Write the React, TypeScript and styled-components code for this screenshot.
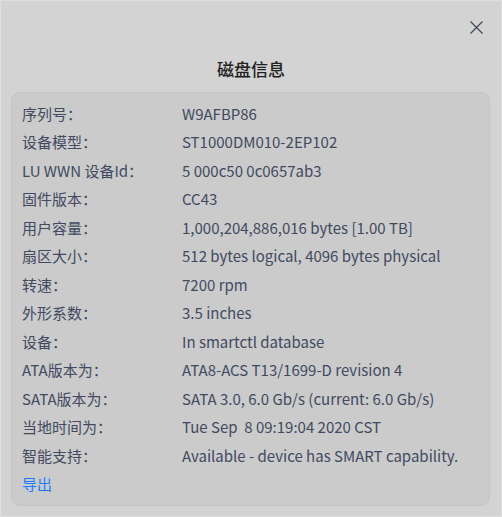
import React from "react";
import styled, { createGlobalStyle } from "styled-components";

const Global = createGlobalStyle`
  html, body { margin: 0; padding: 0; }
  body { background: #d3d3d3; }
`;

const Window = styled.div`
  box-sizing: border-box;
  width: 502px;
  height: 517px;
  background: #d3d3d3;
  border: 1px solid #dedede;
  display: flex;
  flex-direction: column;
  font-family: "Noto Sans CJK SC", "Noto Sans", sans-serif;
`;

const TitleBar = styled.div`
  height: 48px;
  display: flex;
  justify-content: flex-end;
  align-items: flex-start;
  padding: 20px 18px 0 0;
  box-sizing: border-box;
`;

const CloseButton = styled.button`
  width: 13px;
  height: 13px;
  padding: 0;
  border: none;
  background: transparent;
  display: flex;
  cursor: pointer;
`;

const Title = styled.h1`
  margin: 0;
  height: 42px;
  font-size: 17px;
  font-weight: 500;
  color: #202020;
  text-align: center;
  line-height: 40px;
`;

const Panel = styled.div`
  margin: 1px 11px 0 10px;
  box-sizing: border-box;
  height: 414px;
  background: #cbcbcb;
  border: 1px solid #c4c4c4;
  border-radius: 9px;
  padding: 6px 11px 0 10px;
  display: flex;
  flex-direction: column;
`;

const Grid = styled.div`
  display: grid;
  grid-template-columns: 160px 1fr;
  grid-auto-rows: 28.5px;
  align-items: center;
`;

const Label = styled.div`
  font-size: 15px;
  color: #414a60;
  white-space: nowrap;
`;

const Value = styled.div`
  font-size: 15px;
  color: #414a60;
  white-space: pre;
`;

const ExportLink = styled.a`
  font-size: 15px;
  color: #1a7bff;
  height: 28.5px;
  line-height: 28.5px;
  text-decoration: none;
  cursor: pointer;
`;

const rows: [string, string][] = [
  ["序列号：", "W9AFBP86"],
  ["设备模型：", "ST1000DM010-2EP102"],
  ["LU WWN 设备Id：", "5 000c50 0c0657ab3"],
  ["固件版本：", "CC43"],
  ["用户容量：", "1,000,204,886,016 bytes [1.00 TB]"],
  ["扇区大小：", "512 bytes logical, 4096 bytes physical"],
  ["转速：", "7200 rpm"],
  ["外形系数：", "3.5 inches"],
  ["设备：", "In smartctl database"],
  ["ATA版本为：", "ATA8-ACS T13/1699-D revision 4"],
  ["SATA版本为：", "SATA 3.0, 6.0 Gb/s (current: 6.0 Gb/s)"],
  ["当地时间为：", "Tue Sep  8 09:19:04 2020 CST"],
  ["智能支持：", "Available - device has SMART capability."],
];

export default function App() {
  return (
    <>
      <Global />
      <Window>
        <TitleBar>
          <CloseButton aria-label="close">
            <svg width="13" height="13" viewBox="0 0 13 13">
              <path d="M0.5 0.5L12.5 12.5M12.5 0.5L0.5 12.5" stroke="#3c4257" strokeWidth="1.1" fill="none" />
            </svg>
          </CloseButton>
        </TitleBar>
        <Title>磁盘信息</Title>
        <Panel>
          <Grid>
            {rows.map(([k, v]) => (
              <React.Fragment key={k}>
                <Label>{k}</Label>
                <Value>{v}</Value>
              </React.Fragment>
            ))}
          </Grid>
          <ExportLink>导出</ExportLink>
        </Panel>
      </Window>
    </>
  );
}
